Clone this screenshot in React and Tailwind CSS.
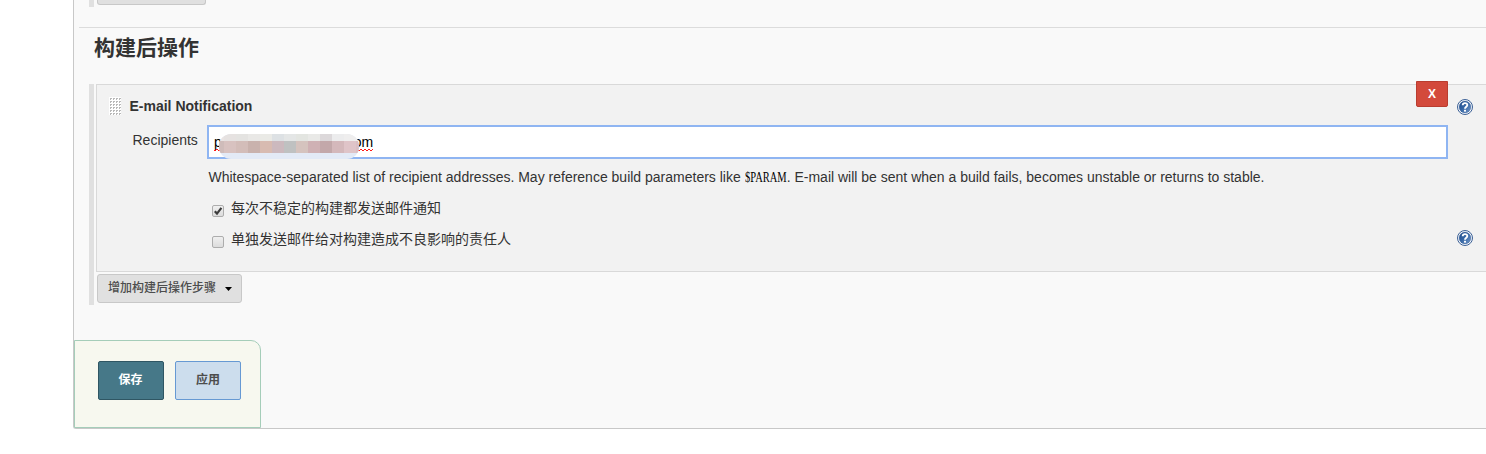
const MOSAIC = [
  [5, '#eae4e3', '#cfbcba'],
  [12, '#e6e2e1', '#d8c2c0'],
  [12, '#e4e3e1', '#d3bdb9'],
  [12, '#e9e8e6', '#c9b2ad'],
  [12, '#eaeae6', '#d8bbb1'],
  [12, '#dde1e4', '#ccb9be'],
  [12, '#e4e6e6', '#bfc1c1'],
  [12, '#e3e5e1', '#d5c3be'],
  [12, '#e9e9e7', '#cfb1b4'],
  [12, '#dcd8da', '#c3a8aa'],
  [12, '#ececed', '#d4b8bb'],
  [12, '#efeeee', '#dfc4c8'],
  [3, '#f0efef', '#d9bfc4'],
];

function Help() {
  return (
    <svg className="block size-4" viewBox="0 0 16 16">
      <defs>
        <linearGradient id="help" x1="0" y1="0" x2="1" y2="1">
          <stop offset="0" stopColor="#204a87" />
          <stop offset="0.45" stopColor="#3465a4" />
          <stop offset="1" stopColor="#7599c8" />
        </linearGradient>
      </defs>
      <circle cx="8" cy="8" r="7.5" fill="#fff" stroke="#3a5f95" />
      <circle cx="8" cy="8" r="5.9" fill="url(#help)" stroke="#2d5592" strokeWidth="0.4" />
      <path d="M5.7 6.2C5.7 3.5 10.3 3.4 10.3 6.1C10.3 7.7 8 7.8 8 9.8" fill="none" stroke="#fff" strokeWidth="1.9" />
      <rect x="7" y="10.8" width="2" height="1.8" fill="#fff" />
    </svg>
  );
}

function Grip() {
  return (
    <svg className="block h-[18px] w-3" viewBox="0 0 12 18">
      <defs>
        <pattern id="grip" width="3" height="3" patternUnits="userSpaceOnUse">
          <rect width="3" height="3" fill="#fff" />
          <path d="M1 1h2v1H2v1H1z" fill="#b8b8b8" />
        </pattern>
      </defs>
      <rect width="12" height="18" fill="url(#grip)" />
    </svg>
  );
}

function Misspelled({ children }) {
  return (
    <span className="relative block">
      {children}
      <svg className="absolute bottom-0 left-0 h-[3px] w-full overflow-hidden">
        <defs>
          <pattern id="squiggle" width="4" height="3" patternUnits="userSpaceOnUse">
            <path d="M0 1h2v1h-2zM2 0h2v1h-2z" fill="#ff1a1a" />
          </pattern>
        </defs>
        <rect width="100%" height="3" fill="url(#squiggle)" />
      </svg>
    </span>
  );
}

function Check({ checked }) {
  return (
    <span className="mt-[7px] block size-3 shrink-0 rounded-[2px] border border-[#adadad] bg-linear-to-b from-[#f0f0f0] to-[#dcdcdc]">
      {checked && (
        <svg className="block size-[10px]" viewBox="0 0 10 10">
          <path d="M1.8 5.2L4 7.6L8.4 1.8" fill="none" stroke="#3c3c3c" strokeWidth="2.2" />
        </svg>
      )}
    </span>
  );
}

export default function App() {
  return (
    <div className="h-[454px] w-[1486px] overflow-hidden bg-white pl-[73px] font-['Liberation_Sans','Noto_Sans_CJK_SC',sans-serif] text-[14px] leading-5 text-[#333]">
      <div className="flex h-[429px] flex-col rounded-bl-[3px] border-b border-l border-[#c8c8c8] bg-[#f9f9f9]">
        <div className="flex h-[7px] shrink-0 gap-[3px] pl-[15px]">
          <div className="w-[5px] bg-[#e0e0e0]" />
          <div className="h-[5px] w-[109px] rounded-b-[3px] border border-t-0 border-[#c8c8c8] bg-[#e0e0e0]" />
        </div>
        <div className="mt-5 ml-[5px] h-px shrink-0 bg-[#dcdcdc]" />
        <h2 className="mt-[5px] h-[30px] shrink-0 pl-[20px] text-[21px] leading-[30px] font-bold">构建后操作</h2>
        <div className="mt-[21px] flex h-[221px] shrink-0 gap-[2px] pl-[15px]">
          <div className="w-[5px] shrink-0 bg-[#e0e0e0]" />
          <div className="flex-1">
            <div className="h-[188px] border border-r-0 border-[#d9d9d9] bg-[#f2f2f2]">
              <div className="flex h-10 pl-[12px]">
                <div className="mt-[12px]"><Grip /></div>
                <b className="mt-[11px] ml-[8.5px]">E-mail Notification</b>
                <button className="-mt-[4px] ml-auto h-[26px] w-8 rounded-b-[2px] border border-[#b93d30] bg-[#d34a3c] text-[12px] leading-none font-bold text-white">X</button>
                <div className="mt-[14px] mr-[13px] ml-[9px]"><Help /></div>
              </div>
              <div className="flex h-[34px] pr-[38px]">
                <span className="mt-[5px] w-[110px] shrink-0 pl-[35.5px]">Recipients</span>
                <div className="relative flex h-[34px] flex-1 items-center border-2 border-[#8fb5f2] bg-white pl-[5px] text-black">
                  <Misspelled>p</Misspelled>
                  <span className="ml-[132px]"><Misspelled>om</Misspelled></span>
                  <div className="absolute top-[7px] left-[10px] flex h-[25px] w-[140px] overflow-hidden rounded-[12px] bg-[#e3eaf6]">
                    {MOSAIC.map(([w, top, mid], i) => (
                      <div key={i} className="flex shrink-0 flex-col" style={{ width: w }}>
                        <div className="h-[7px]" style={{ background: top }} />
                        <div className="h-3" style={{ background: mid }} />
                      </div>
                    ))}
                  </div>
                </div>
              </div>
              <p className="mt-[8px] h-5 pl-[111.5px] whitespace-nowrap">
                Whitespace-separated list of recipient addresses. May reference build parameters like{' '}
                <span className="inline-block w-[42px]">
                  <span className="inline-block origin-left scale-x-[0.75] font-['Liberation_Serif',serif] text-black">$PARAM</span>
                </span>
                . E-mail will be sent when a build fails, becomes unstable or returns to stable.
              </p>
              <div className="mt-[11px] flex h-5 gap-[7px] pl-[115px]">
                <Check checked />
                <span>每次不稳定的构建都发送邮件通知</span>
              </div>
              <div className="mt-[11px] flex h-5 gap-[7px] pl-[115px]">
                <Check />
                <span>单独发送邮件给对构建造成不良影响的责任人</span>
                <div className="mt-px mr-[13px] ml-auto"><Help /></div>
              </div>
            </div>
            <button className="mt-[2px] ml-px flex h-[29px] w-[145px] items-center gap-[9px] rounded-[3px] border border-[#c8c8c8] bg-[#e0e0e0] pl-[10px] text-[12px] font-medium text-[#4d4d4d]">
              <span className="pb-[2px]">增加构建后操作步骤</span>
              <svg className="block h-1 w-[7px]" viewBox="0 0 7 4"><path d="M0 0h7L3.5 4z" fill="#000" /></svg>
            </button>
          </div>
        </div>
        <div className="mt-auto flex h-[88px] w-[187px] gap-[11px] rounded-tr-[10px] border border-[#a5cdb9] bg-[#f7f8ef] pt-5 pl-[23px] text-[12px] font-bold">
          <button className="h-[39px] w-[66px] rounded-[2px] border border-[#2f5663] bg-[#467888] pr-px pb-[2px] text-white">保存</button>
          <button className="h-[39px] w-[66px] rounded-[2px] border border-[#6699d3] bg-[#ccdded] pb-[2px] text-[#4d4d4d]">应用</button>
        </div>
      </div>
    </div>
  );
}
